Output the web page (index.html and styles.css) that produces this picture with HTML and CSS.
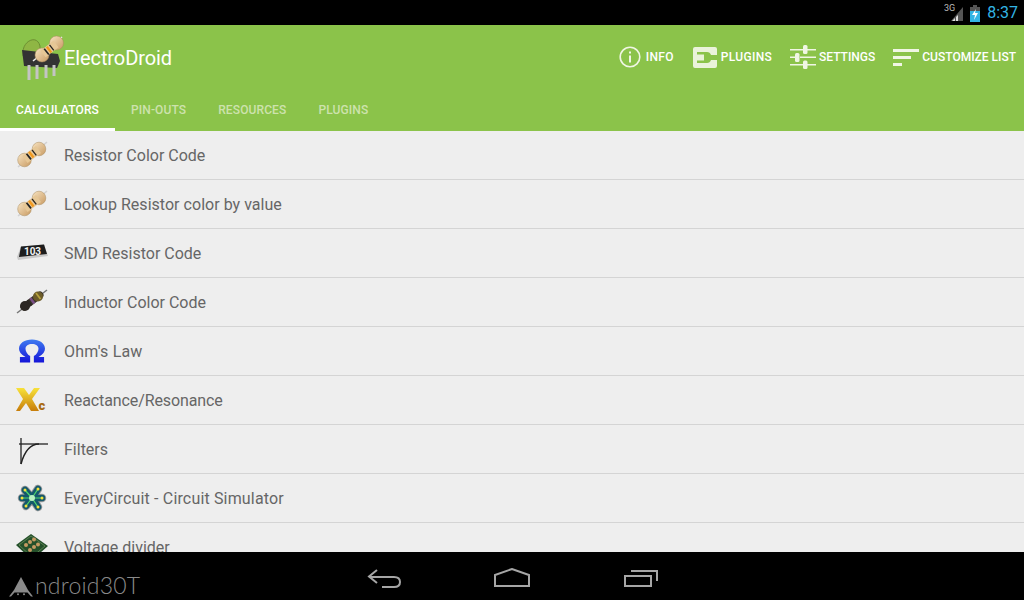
FILE: index.html
```html
<!DOCTYPE html>
<html>
<head>
  <title>ElectroDroid</title>
  <link rel="stylesheet" href="styles.css">
</head>
<body>
  <svg class="defs" width="0" height="0">
    <defs>
      <linearGradient id="bead" x1="0" y1="0" x2="1" y2="1">
        <stop offset="0" stop-color="#f8e4c2"/>
        <stop offset="1" stop-color="#c89a62"/>
      </linearGradient>
      <linearGradient id="omega" x1="0" y1="0" x2="0" y2="1">
        <stop offset="0" stop-color="#3f7bf0"/>
        <stop offset="1" stop-color="#1414d8"/>
      </linearGradient>
      <linearGradient id="gold" x1="0" y1="0" x2="0" y2="1">
        <stop offset="0" stop-color="#f8e23a"/>
        <stop offset="1" stop-color="#c77d0a"/>
      </linearGradient>
      <symbol id="resistor" viewBox="0 0 32 28">
        <path d="M2 26 L31 1" stroke="#d2d2d2" stroke-width="1.600"/>
        <circle cx="8.500" cy="19" r="6.800" fill="url(#bead)" stroke="#a98a5c" stroke-width=".5"/>
        <circle cx="23" cy="8" r="6.800" fill="url(#bead)" stroke="#a98a5c" stroke-width=".5"/>
        <path d="M9 18.500 L22.500 8.500" stroke="#e6c796" stroke-width="8.500"/>
        <path d="M10.500 12.700 L15 18.400" stroke="#222" stroke-width="1.700"/>
        <path d="M13 10.800 L17.500 16.500" stroke="#f29a1f" stroke-width="2.400"/>
        <path d="M16 8.800 L20.300 14.300" stroke="#222" stroke-width="1.300"/>
      </symbol>
    </defs>
  </svg>

  <div class="status-bar">
    <span class="net">3G</span>
    <svg class="signal" width="14" height="16" viewBox="0 0 14 16">
      <path d="M13 1 V15 H1 Z" fill="#555"/>
      <path d="M2 15 L5 12 V15 Z M6 15 V11 L8 9 V15 Z" fill="#ddd"/>
    </svg>
    <svg class="battery" width="10" height="17" viewBox="0 0 10 17">
      <path d="M3 0 H7 V2 H10 V17 H0 V2 H3 Z" fill="#555"/>
      <path d="M0 6 H10 V17 H0 Z" fill="#33b5e5"/>
      <path d="M6 4 L2 10 H5 L4 15 L8 8 H5 Z" fill="#fff"/>
    </svg>
    <span class="clock">8:37</span>
  </div>

  <header class="app-header">
    <div class="action-bar">
      <svg class="logo" width="44" height="48" viewBox="0 0 44 48">
        <path d="M3 18 C3 7 17 0 20 12 V22 H3 Z" fill="#8fb644" stroke="#6d8f32"/>
        <path d="M2 16 L38 20 L40 27 L37 34 L4 32 Z" fill="#333"/>
        <path d="M9 31 V46 M17 31 V45 M26 31 V44 M34 31 V42" stroke="#c4c4c4" stroke-width="3"/>
        <path d="M13 27 L42 3" stroke="#eee" stroke-width="1.600"/>
        <circle cx="22" cy="21" r="7" fill="url(#bead)" stroke="#a98a5c" stroke-width=".5"/>
        <circle cx="36.500" cy="9" r="7" fill="url(#bead)" stroke="#a98a5c" stroke-width=".5"/>
        <path d="M23 20 L36 10" stroke="#e6c796" stroke-width="8.500"/>
        <path d="M24.200 14.800 L28.800 20.500" stroke="#222" stroke-width="1.600"/>
        <path d="M26.800 12.800 L31.300 18.500" stroke="#f29a1f" stroke-width="2.200"/>
        <path d="M29.500 10.800 L33.800 16.300" stroke="#222" stroke-width="1.300"/>
      </svg>
      <span class="app-title">ElectroDroid</span>
      <nav class="actions">
        <a class="action action-info">
          <svg width="22" height="22" viewBox="0 0 22 22" fill="none" stroke="#f0f6e4" stroke-width="1.600">
            <circle cx="11" cy="11" r="9.800"/>
            <path d="M11 9.500 V16.500" stroke-width="2"/>
            <path d="M11 5.500 V7.500" stroke-width="2"/>
          </svg>
          INFO
        </a>
        <a class="action action-plugins">
          <svg width="24" height="21" viewBox="0 0 24 21">
            <path fill-rule="evenodd" d="M2 0 H22 Q24 0 24 2 V8 H18 Q17 5 14 5 H4 V7.500 H11 V13.500 H4 V16 H14 Q17 16 18 13 H24 V19 Q24 21 22 21 H2 Q0 21 0 19 V2 Q0 0 2 0 Z" fill="#eaf3da"/>
          </svg>
          PLUGINS
        </a>
        <a class="action action-settings">
          <svg width="26" height="24" viewBox="0 0 26 24" fill="#f0f6e4">
            <path d="M0 4 H13 V5.500 H0 Z M17 4 H26 V5.500 H17 Z M0 11.500 H5 V13 H0 Z M10 11.500 H26 V13 H10 Z M0 19 H13 V20.500 H0 Z M17 19 H26 V20.500 H17 Z"/>
            <rect x="13" y="0" width="4.500" height="9" rx="1.500"/>
            <rect x="5" y="8" width="4.500" height="9" rx="1.500"/>
            <rect x="13" y="15.500" width="4.500" height="8.500" rx="1.500"/>
          </svg>
          SETTINGS
        </a>
        <a class="action action-custom">
          <svg width="26" height="17" viewBox="0 0 26 17" fill="#f0f6e4">
            <rect x="0" y="0" width="26" height="3"/>
            <rect x="0" y="7" width="18" height="3"/>
            <rect x="0" y="14" width="9" height="3"/>
          </svg>
          CUSTOMIZE LIST
        </a>
      </nav>
    </div>
    <div class="tabs">
      <div class="tab active">CALCULATORS</div>
      <div class="tab">PIN-OUTS</div>
      <div class="tab">RESOURCES</div>
      <div class="tab">PLUGINS</div>
    </div>
  </header>

  <ul class="calc-list">
    <li class="row">
      <svg class="row-icon" width="32" height="28"><use href="#resistor"/></svg>
      <span>Resistor Color Code</span>
    </li>
    <li class="row">
      <svg class="row-icon" width="32" height="28"><use href="#resistor"/></svg>
      <span class="loose-s">Lookup Resistor color by value</span>
    </li>
    <li class="row">
      <svg class="row-icon" width="32" height="18" viewBox="0 0 32 18">
        <path d="M5 2.500 L28 .5 L32 12 L2 16 L1 13 Z" fill="#c8c8c8"/>
        <path d="M5 2.500 L28 .5 L31 10 L3 13 Z" fill="#1d1d1d"/>
        <text x="16.500" y="10.500" class="smd-text">103</text>
      </svg>
      <span>SMD Resistor Code</span>
    </li>
    <li class="row">
      <svg class="row-icon" width="32" height="26" viewBox="0 0 32 26">
        <path d="M1 24 L31 1" stroke="#777" stroke-width="1.500"/>
        <path d="M8 18 L24 6" stroke="#3a342a" stroke-width="7" stroke-linecap="round"/>
        <circle cx="9" cy="17" r="5" fill="#2b2622"/>
        <circle cx="22" cy="7.500" r="5" fill="#6d5c2a"/>
        <path d="M11.500 11 L15.500 16.500" stroke="#2b2622" stroke-width="2"/>
        <path d="M14.300 9 L18.300 14.500" stroke="#7a4f86" stroke-width="2.500"/>
        <path d="M20 4 L24.500 10" stroke="#b7a23e" stroke-width="1.800"/>
      </svg>
      <span>Inductor Color Code</span>
    </li>
    <li class="row">
      <svg class="row-icon" width="26" height="25" viewBox="0 0 28 25">
        <path d="M1 25 V19 H7 C2 16 0 13 0 10 C0 4 6 0 14 0 C22 0 28 4 28 10 C28 13 26 16 21 19 H27 V25 H16 V18 C19 16 21 13 21 10 C21 7 18 5 14 5 C10 5 7 7 7 10 C7 13 9 16 12 18 V25 Z" fill="url(#omega)"/>
      </svg>
      <span class="loose">Ohm's Law</span>
    </li>
    <li class="row">
      <svg class="row-icon" width="32" height="24" viewBox="0 0 32 24">
        <path d="M0 0 H8 L13 7 L18 0 H24 L16 11 L23 23 H15 L10 15 L4 23 H0 L7 11 Z" fill="url(#gold)"/>
        <text x="22.500" y="22" class="xc-text">c</text>
      </svg>
      <span class="tight">Reactance/Resonance</span>
    </li>
    <li class="row">
      <svg class="row-icon" width="30" height="28" viewBox="0 0 30 28" fill="none" stroke="#222" stroke-width="1.300">
        <path d="M2 9 H31"/>
        <path d="M4 3 V29"/>
        <path d="M4 29 C7 18 12 9 22 9" stroke-width="1.500"/>
      </svg>
      <span>Filters</span>
    </li>
    <li class="row">
      <svg class="row-icon" width="28" height="28" viewBox="0 0 28 28" fill="none" stroke-linecap="round">
        <path d="M14 14 L7 6 M14 14 L20 5 M14 14 L24 14 M14 14 L20 23 M14 14 L8 22 M14 14 L4 14" stroke="#9a9a9a" stroke-width="8.500"/>
        <path d="M14 14 L7 6 M14 14 L20 5 M14 14 L24 14 M14 14 L20 23 M14 14 L8 22 M14 14 L4 14" stroke="#14586c" stroke-width="6.500"/>
        <path d="M14 14 L7 6 M14 14 L20 5 M14 14 L24 14 M14 14 L20 23 M14 14 L8 22 M14 14 L4 14" stroke="#4fd86a" stroke-width="1.200"/>
        <circle cx="14" cy="14" r="3" fill="#b8f0c0"/>
        <g fill="#f2e23a">
          <circle cx="7" cy="6" r="1.500"/><circle cx="20" cy="5" r="1.500"/><circle cx="24" cy="14" r="1.500"/>
          <circle cx="20" cy="23" r="1.500"/><circle cx="8" cy="22" r="1.500"/><circle cx="4" cy="14" r="1.500"/>
        </g>
      </svg>
      <span class="loose-m">EveryCircuit - Circuit Simulator</span>
    </li>
    <li class="row">
      <svg class="row-icon" width="32" height="26" viewBox="0 0 32 26">
        <path d="M0 11 L15 0 L32 12 L16 26 Z" fill="#24502a"/>
        <path d="M3 11 L15 2 L29 12 L16 23 Z" fill="none" stroke="#7fa06a" stroke-width=".6"/>
        <g fill="#c49a62">
          <circle cx="10" cy="11" r="2"/><circle cx="14" cy="8" r="2"/><circle cx="18" cy="5.500" r="2"/>
          <circle cx="14" cy="16" r="2"/><circle cx="18" cy="13" r="2"/><circle cx="22" cy="10.500" r="2"/>
        </g>
      </svg>
      <span>Voltage divider</span>
    </li>
  </ul>

  <footer class="nav-bar">
    <div class="watermark">
      <svg width="24" height="20" viewBox="0 0 24 20" fill="#8a8a8a">
        <path d="M12 0 L19 13 H5 Z"/>
        <path d="M5 13 H19 L24 19.500 H22 L18.500 15.500 H5.500 L2 19.500 H0 Z"/>
        <circle cx="9" cy="17.300" r="1"/>
        <circle cx="15" cy="17.300" r="1"/>
      </svg>
      <span>ndroid30T</span>
    </div>
    <svg class="nav-icon nav-back" width="34" height="19" viewBox="0 0 34 19" fill="none" stroke="#a6a6a6" stroke-width="2">
      <path d="M10 1 L2 7.500 L10 14"/>
      <path d="M2 8 H27 Q33 8 33 13 Q33 18 27 18 H15"/>
    </svg>
    <svg class="nav-icon nav-home" width="36" height="19" viewBox="0 0 36 19" fill="none" stroke="#a6a6a6" stroke-width="2">
      <path d="M1 18 H35 V7 L18 1 L1 7 Z"/>
    </svg>
    <svg class="nav-icon nav-recent" width="34" height="17" viewBox="0 0 34 17" fill="none" stroke="#a6a6a6" stroke-width="2">
      <path d="M1 6 H27 V16 H1 Z"/>
      <path d="M7 1 H33 V11"/>
    </svg>
  </footer>
</body>
</html>
```

FILE: styles.css
```css
* {
  margin: 0;
  padding: 0;
  box-sizing: border-box;
  font-family: Roboto, 'Liberation Sans', sans-serif;
}

html, body {
  width: 1024px;
  height: 600px;
  overflow: hidden;
}

body {
  display: flex;
  flex-direction: column;
  background-color: #eeeeee;
}

.defs {
  position: absolute;
}

.status-bar {
  height: 25px;
  background-color: #000;
  display: flex;
  align-items: center;
  justify-content: flex-end;
  padding-right: 6px;
  flex: none;
}

.net {
  font-size: 9px;
  color: #bbb;
  margin-right: -5px;
  margin-bottom: 9px;
}

.signal {
  margin-right: 6px;
  margin-top: 2px;
}

.battery {
  margin-right: 7px;
  margin-top: 1px;
}

.clock {
  font-size: 16px;
  color: #33b5e5;
}

.app-header {
  height: 106px;
  background-color: #8bc34a;
  flex: none;
  display: flex;
  flex-direction: column;
}

.action-bar {
  height: 66px;
  display: flex;
  align-items: center;
  padding-left: 20px;
  padding-right: 8px;
}

.app-title {
  color: #fff;
  font-size: 20px;
  letter-spacing: -0.1px;
}

.actions {
  margin-left: auto;
  margin-bottom: 2px;
  display: flex;
  align-items: center;
}

.action {
  display: flex;
  align-items: center;
  color: #fff;
  font-size: 12px;
  font-weight: 500;
  white-space: nowrap;
}

.action-info { letter-spacing: 0.3px; }
.action-info svg { margin-right: 5px; }
.action-plugins { margin-left: 19px; letter-spacing: 0.3px; }
.action-plugins svg { margin-right: 4px; }
.action-settings { margin-left: 18px; }
.action-settings svg { margin-right: 3px; }
.action-custom { margin-left: 18px; }
.action-custom svg { margin-right: 3px; }

.tabs {
  display: flex;
  flex: 1;
}

.tab {
  height: 40px;
  line-height: 39px;
  padding: 0 16px;
  font-size: 12px;
  font-weight: 500;
  letter-spacing: 0.12px;
  color: #cde2ad;
}

.tab.active {
  color: #fff;
  border-bottom: 3px solid #fff;
}

.calc-list {
  list-style: none;
  flex: 1;
  overflow: hidden;
}

.row {
  height: 49px;
  display: flex;
  align-items: center;
  position: relative;
  padding-left: 64px;
  border-bottom: 1px solid #d4d4d4;
  font-size: 16px;
  color: #666;
}

.row-icon {
  position: absolute;
  left: 32px;
  top: 24px;
  transform: translate(-50%, -50%);
  overflow: visible;
}

.loose-s { letter-spacing: 0.03px; }
.loose-m { letter-spacing: 0.16px; }
.loose { letter-spacing: 0.2px; }
.tight { letter-spacing: -0.1px; }

.smd-text {
  font-size: 10px;
  font-weight: 700;
  fill: #f2f2f2;
  text-anchor: middle;
}

.xc-text {
  font-size: 13px;
  font-weight: 900;
  fill: #a86a10;
}

.nav-bar {
  height: 48px;
  background-color: #000;
  flex: none;
  position: relative;
}

.nav-icon {
  position: absolute;
  top: 17px;
}

.nav-back { left: 367px; }
.nav-home { left: 494px; top: 16px; }
.nav-recent { left: 624px; top: 18px; }

.watermark {
  position: absolute;
  left: 9px;
  top: 21px;
  display: flex;
  align-items: flex-end;
  color: #8a8a8a;
}

.watermark span {
  font-family: Lato, Roboto, sans-serif;
  font-size: 23px;
  font-weight: 300;
  line-height: 24px;
  letter-spacing: 0.2px;
  margin-left: 2px;
}
```
